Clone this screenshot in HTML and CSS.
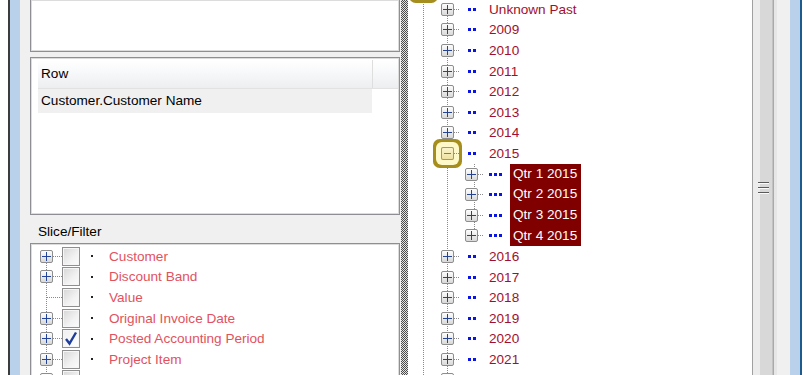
FILE: index.html
```html
<!DOCTYPE html>
<html lang="en">
  <head>
    <meta charset="UTF-8" />
    <title>Slice / Filter</title>
    <link rel="stylesheet" href="styles.css">
  </head>
  <body>
    <div class="window">
      <div class="frame-left"></div>

      <div class="left-col">
        <div class="panel panel-top"></div>

        <div class="panel panel-rows">
          <div class="grid-head">
            <div class="col-main">Row</div>
            <div class="col-rest"></div>
          </div>
          <div class="grid-row">Customer.Customer Name</div>
        </div>

        <div class="section-label">Slice/Filter</div>

        <div class="panel panel-filter">
          <div class="ftree">
            <div class="f-row"><span class="pbox"></span><span class="conn"></span><span class="chk"></span><span class="bullet"></span><span class="f-label">Customer</span></div>
            <div class="f-row"><span class="pbox"></span><span class="conn"></span><span class="chk"></span><span class="bullet"></span><span class="f-label">Discount Band</span></div>
            <div class="f-row"><span class="nobox"></span><span class="conn long"></span><span class="chk"></span><span class="bullet"></span><span class="f-label">Value</span></div>
            <div class="f-row"><span class="pbox"></span><span class="conn"></span><span class="chk"></span><span class="bullet"></span><span class="f-label">Original Invoice Date</span></div>
            <div class="f-row"><span class="pbox"></span><span class="conn"></span><span class="chk checked"><svg width="16" height="17" viewBox="0 0 16 17"><path d="M3 9 L6.5 13.5 L13 2.5" fill="none" stroke="#1f3e9c" stroke-width="2.4"/></svg></span><span class="bullet"></span><span class="f-label">Posted Accounting Period</span></div>
            <div class="f-row"><span class="pbox"></span><span class="conn"></span><span class="chk"></span><span class="bullet"></span><span class="f-label">Project Item</span></div>
            <div class="f-row"><span class="pbox"></span><span class="conn"></span><span class="chk"></span><span class="bullet"></span><span class="f-label">Product</span></div>
          </div>
        </div>
      </div>

      <div class="splitter"></div>

      <div class="tree-panel">
        <div class="tree">
          <div class="t-row"><span class="tog"><span class="pbox minus focus"></span></span></div>

          <div class="t-row lv1"><span class="tog"><span class="pbox"></span><span class="conn"></span></span><span class="dots two"></span><span class="t-label">Unknown Past</span></div>
          <div class="t-row lv1"><span class="tog"><span class="pbox"></span><span class="conn"></span></span><span class="dots two"></span><span class="t-label">2009</span></div>
          <div class="t-row lv1"><span class="tog"><span class="pbox"></span><span class="conn"></span></span><span class="dots two"></span><span class="t-label">2010</span></div>
          <div class="t-row lv1"><span class="tog"><span class="pbox"></span><span class="conn"></span></span><span class="dots two"></span><span class="t-label">2011</span></div>
          <div class="t-row lv1"><span class="tog"><span class="pbox"></span><span class="conn"></span></span><span class="dots two"></span><span class="t-label">2012</span></div>
          <div class="t-row lv1"><span class="tog"><span class="pbox"></span><span class="conn"></span></span><span class="dots two"></span><span class="t-label">2013</span></div>
          <div class="t-row lv1"><span class="tog"><span class="pbox"></span><span class="conn"></span></span><span class="dots two"></span><span class="t-label">2014</span></div>
          <div class="t-row lv1"><span class="tog"><span class="pbox minus focus"></span><span class="conn"></span></span><span class="dots two"></span><span class="t-label">2015</span></div>

          <div class="t-group">
            <div class="t-row lv2"><span class="tog"><span class="pbox"></span><span class="conn"></span></span><span class="dots three"></span><span class="t-label sel">Qtr 1 2015</span></div>
            <div class="t-row lv2"><span class="tog"><span class="pbox"></span><span class="conn"></span></span><span class="dots three"></span><span class="t-label sel">Qtr 2 2015</span></div>
            <div class="t-row lv2"><span class="tog"><span class="pbox"></span><span class="conn"></span></span><span class="dots three"></span><span class="t-label sel">Qtr 3 2015</span></div>
            <div class="t-row lv2"><span class="tog"><span class="pbox"></span><span class="conn"></span></span><span class="dots three"></span><span class="t-label sel">Qtr 4 2015</span></div>
          </div>

          <div class="t-row lv1"><span class="tog"><span class="pbox"></span><span class="conn"></span></span><span class="dots two"></span><span class="t-label">2016</span></div>
          <div class="t-row lv1"><span class="tog"><span class="pbox"></span><span class="conn"></span></span><span class="dots two"></span><span class="t-label">2017</span></div>
          <div class="t-row lv1"><span class="tog"><span class="pbox"></span><span class="conn"></span></span><span class="dots two"></span><span class="t-label">2018</span></div>
          <div class="t-row lv1"><span class="tog"><span class="pbox"></span><span class="conn"></span></span><span class="dots two"></span><span class="t-label">2019</span></div>
          <div class="t-row lv1"><span class="tog"><span class="pbox"></span><span class="conn"></span></span><span class="dots two"></span><span class="t-label">2020</span></div>
          <div class="t-row lv1"><span class="tog"><span class="pbox"></span><span class="conn"></span></span><span class="dots two"></span><span class="t-label">2021</span></div>
          <div class="t-row lv1"><span class="tog"><span class="pbox"></span><span class="conn"></span></span><span class="dots two"></span><span class="t-label future">Unknown Future</span></div>
        </div>

        <div class="vscroll"><span class="grip"></span></div>
      </div>

      <div class="frame-right"></div>
    </div>
  </body>
</html>
```

FILE: styles.css
```css
body{
  margin: 0;
  overflow: hidden;
  background: #fff;
  font-family: "Liberation Sans", Arial, sans-serif;
  font-size: 13.6px;
  color: #000;
}
.window{
  display: flex;
  height: 375px;
  width: 808px;
  overflow: hidden;
}
.frame-left{
  width: 30px;
  flex: none;
  background: linear-gradient(to right, #fff 0 8px, #3c3c3c 8px 10px, #b9d1ea 10px 20px, #f0f0f0 20px 30px);
}
.frame-right{
  width: 31px;
  flex: none;
  background: linear-gradient(to right, #f0f0f0 0 13px, #b9d1ea 13px 23px, #1d5b8e 23px 25px, #fff 25px);
}

/* left column */
.left-col{
  width: 370px;
  flex: none;
  display: flex;
  flex-direction: column;
  overflow: hidden;
  background: #f0f0f0;
}
.panel{
  flex: none;
  background: #fff;
  border: 1px solid #8e8f94;
  box-shadow: inset 0 0 0 1px #dcdcdc;
}
.panel-top{
  height: 51px;
  border-top: 0;
}
.panel-rows{
  margin-top: 5px;
  height: 154px;
  padding: 2px 1px 0 7px;
}
.grid-head{
  display: flex;
  height: 28px;
  border-bottom: 1px solid #e2e2e2;
}
.col-main{
  width: 331px;
  padding-left: 3px;
  line-height: 28px;
  border-right: 1px solid #dedede;
  background: linear-gradient(#fff, #f7f8f9 45%, #eceef0);
}
.col-rest{
  flex: 1;
  background: linear-gradient(#fff, #f7f8f9 45%, #eceef0);
}
.grid-row{
  width: 331px;
  height: 24px;
  line-height: 24px;
  padding-left: 3px;
  background: #f0f0f0;
}
.section-label{
  flex: none;
  height: 28px;
  padding: 4px 0 0 8px;
  box-sizing: border-box;
  display: flex;
  align-items: center;
}
.panel-filter{
  flex: 1 0 auto;
  padding-top: 2px;
  border-bottom: 0;
}
.ftree{
  background: repeating-linear-gradient(to bottom, #8a8a8a 0 1px, transparent 1px 2px) no-repeat 15px 11px / 1px 100%;
}
.f-row{
  display: flex;
  align-items: center;
  height: 20.6px;
  padding-left: 9px;
}
.nobox{
  width: 6px;
  flex: none;
}
.conn{
  width: 9px;
  flex: none;
  height: 0;
  border-top: 1px dotted #8a8a8a;
}
.conn.long{
  width: 16px;
}
.chk{
  width: 16px;
  height: 17px;
  flex: none;
  border: 1px solid #8f8f8f;
  background: linear-gradient(135deg, #d6d6d6, #f2f2f2 60%, #fbfbfb);
  box-shadow: inset 0 0 0 1px #f6f6f6;
}
.chk.checked{
  background: linear-gradient(135deg, #f0f0f0, #fff);
}
.chk svg{
  display: block;
}
.bullet{
  width: 2px;
  height: 2px;
  margin-left: 11px;
  background: #222;
  flex: none;
}
.f-label{
  margin-left: 16px;
  color: #e2525e;
  white-space: nowrap;
}

/* expander boxes */
.pbox{
  width: 11px;
  height: 11px;
  flex: none;
  border: 1px solid #8d8d8d;
  border-radius: 2px;
  background:
    linear-gradient(#24449a, #24449a) center / 9px 1px no-repeat,
    linear-gradient(#24449a, #24449a) center / 1px 9px no-repeat,
    linear-gradient(#fdfdfd, #d9d9d9);
}
.pbox.minus{
  border-color: #a89a5c;
  background:
    linear-gradient(#7c7c70, #7c7c70) center / 7px 1px no-repeat,
    linear-gradient(#fbf4cc, #efe2a0);
}
.pbox.focus{
  box-shadow: 0 0 0 5px #fff8c8, 0 0 0 8px #a68e1e;
}

/* splitter */
.splitter{
  width: 7px;
  flex: none;
  border-left: 1px solid #f0f0f0;
  background: repeating-conic-gradient(#4a4a4a 0 25%, #e2e2e2 0 50%) 0 0 / 2px 2px;
}

/* right tree */
.tree-panel{
  flex: 1;
  display: flex;
  overflow: hidden;
  background: #fff;
}
.tree{
  flex: 1;
  margin-top: -21.6px;
  padding-left: 3px;
  background:
    repeating-linear-gradient(to bottom, #8a8a8a 0 1px, transparent 1px 2px) no-repeat 15px 0 / 1px 100%,
    repeating-linear-gradient(to bottom, #8a8a8a 0 1px, transparent 1px 2px) no-repeat 39px 30px / 1px 100%;
}
.t-group{
  background: repeating-linear-gradient(to bottom, #8a8a8a 0 1px, transparent 1px 2px) no-repeat 63px 0 / 1px calc(100% - 10px);
}
.t-row{
  display: flex;
  align-items: center;
  height: 20.6px;
}
.lv1{
  padding-left: 24px;
}
.lv2{
  padding-left: 48px;
}
.tog{
  width: 24px;
  flex: none;
  display: flex;
  align-items: center;
  padding-left: 6px;
  box-sizing: border-box;
}
.tog .conn{
  width: 5px;
}
.dots{
  height: 3px;
  flex: none;
  background: repeating-linear-gradient(to right, #0a14e6 0 3px, transparent 3px 5px);
}
.dots.two{
  width: 8px;
  margin-left: 9px;
}
.dots.three{
  width: 13px;
  margin-left: 6px;
}
.t-label{
  margin-left: 13px;
  color: #a20f2e;
  white-space: nowrap;
}
.t-label.sel{
  margin-left: 8px;
  padding: 0 4px 0 3px;
  line-height: 20.6px;
  background: #800000;
  color: #fff;
}
.t-label.future{
  color: #e2525e;
}
.vscroll{
  width: 25px;
  flex: none;
  display: flex;
  align-items: center;
  justify-content: center;
  background: linear-gradient(to right, #a0a0a0 0 1px, #ececec 1px 8px, #d8d8d8 8px 20px, #c2c2c2 20px 21px, #a9a9a9 21px 22px, #e6e6e6 22px 25px);
}
.grip{
  width: 11px;
  height: 12px;
  margin-left: -2px;
  background: repeating-linear-gradient(to bottom, #5a5a5a 0 1px, #fafafa 1px 2px, transparent 2px 5px);
}
```
